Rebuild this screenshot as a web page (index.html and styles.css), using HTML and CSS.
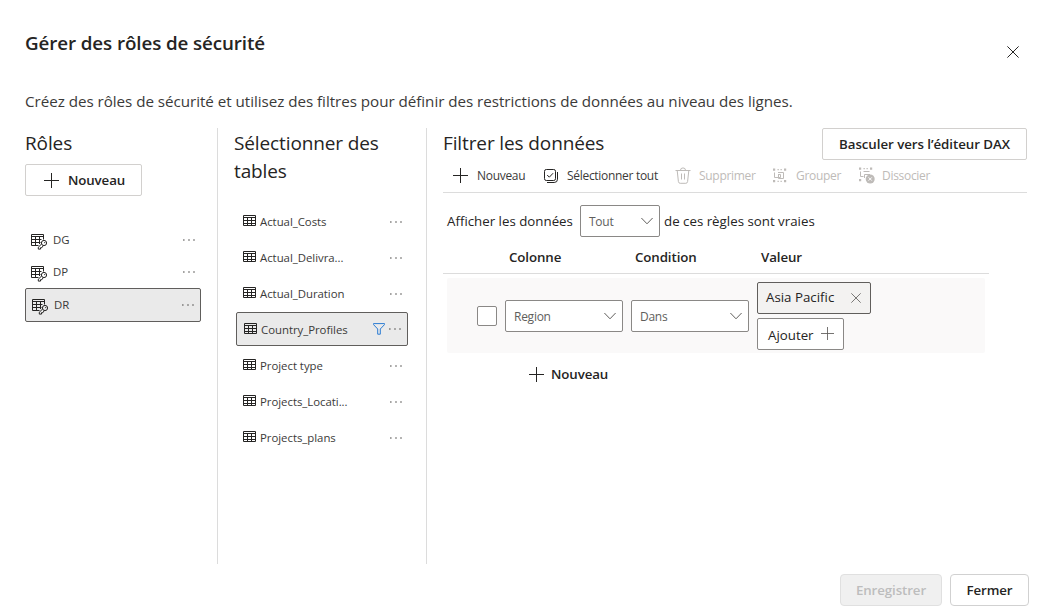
FILE: index.html
```html
<!DOCTYPE html>
<html lang="fr">
<head>
<meta charset="utf-8">
<title>Gérer des rôles de sécurité</title>
<link rel="stylesheet" href="styles.css">
</head>
<body>
<svg class="defs" aria-hidden="true">
  <symbol id="plus" viewBox="0 0 15 15"><path d="M7.5 0v15M0 7.5h15"/></symbol>
  <symbol id="close" viewBox="0 0 12 12"><path d="M.4 .4l11.2 11.2M11.6 .4L.4 11.6"/></symbol>
  <symbol id="chevron" viewBox="0 0 12 8"><path d="M.4 1l5.6 5.8L11.6 1"/></symbol>
  <symbol id="dots" viewBox="0 0 12 2"><path d="M0 1h1.6M5.2 1h1.6M10.2 1h1.6"/></symbol>
  <symbol id="table" viewBox="0 0 13 12"><path d="M.5 .5h12v10H.5zM0 2.5h13M0 5.5h13M0 8.5h13M4.5 2.5v8M8.5 2.5v8"/></symbol>
  <symbol id="role" viewBox="0 0 17 16"><path d="M7.5 11.5H.5V.5h12v5M0 2.5h13M0 5.5h10.5M0 8.5h9.5M4.5 2.5v9M8.5 2.5v7.5M10.6 10L7.3 13.2v1.9h2.2v-1.4h1.4l1.2-1.9"/><circle cx="13" cy="9" r="2.6"/><path d="M13.2 8.6h1"/></symbol>
  <symbol id="funnel" viewBox="0 0 12 12"><path d="M.5 .6h11v1L7.3 6v5.2H4.7V6L.5 1.6z"/></symbol>
  <symbol id="select-all" viewBox="0 0 14 14"><rect x=".5" y=".5" width="11" height="11" rx="1.8"/><path d="M3.2 6l2.1 2.2 3.8-4M13.5 3v7.2a3.3 3.3 0 0 1-3.3 3.3H3"/></symbol>
  <symbol id="trash" viewBox="0 0 16 17"><path d="M.5 3.5h15M5.4 3.5a2.6 2.6 0 0 1 5.2 0M2.2 3.5l1.2 11q.2 1.8 1.8 1.8h5.6q1.6 0 1.8-1.8l1.2-11M6.5 6.5v6M9.5 6.5v6"/></symbol>
  <symbol id="group" viewBox="0 0 15 15"><path d="M2.5 4.5v5h6v-3H6M6 4.5h5.5v6H6.5V7"/><path class="solid" d="M1 .5h2.2v2.2H1zM12 .5h2.2v2.2H12zM1 12h2.2v2.2H1zM12 12h2.2v2.2H12zM5.5 1h1.3v1.3H5.5zM8.5 1h1.3v1.3H8.5zM5.5 12.7h1.3V14H5.5zM8.5 12.7h1.3V14H8.5z"/></symbol>
  <symbol id="ungroup" viewBox="0 0 17 17"><path d="M2.5 4.5v5h3M5.5 4.5h6M6.5 11V7.5H12"/><path class="solid" d="M1 .5h2.2v2.2H1zM12 .5h2.2v2.2H12zM1 12h2.2v2.2H1zM5.5 1h1.3v1.3H5.5zM8.5 1h1.3v1.3H8.5z"/><circle class="solid" cx="12.2" cy="12" r="4.5"/><path class="cross" d="M10.6 10.4l3.2 3.2M13.8 10.4l-3.2 3.2"/></symbol>
</svg>

<main class="dialog">
  <header class="dialog-head">
    <h1>Gérer des rôles de sécurité</h1>
    <button class="close" aria-label="Fermer la fenêtre"><svg width="12" height="12"><use href="#close"/></svg></button>
  </header>
  <p class="intro">Créez des rôles de sécurité et utilisez des filtres pour définir des restrictions de données au niveau des lignes.</p>

  <div class="columns">
    <section class="roles">
      <h2>Rôles</h2>
      <button class="btn new-role"><svg width="15" height="15"><use href="#plus"/></svg><span>Nouveau</span></button>
      <ul class="list">
        <li><svg width="17" height="16"><use href="#role"/></svg><span class="name">DG</span><svg class="more" width="12" height="2"><use href="#dots"/></svg></li>
        <li><svg width="17" height="16"><use href="#role"/></svg><span class="name">DP</span><svg class="more" width="12" height="2"><use href="#dots"/></svg></li>
        <li class="selected"><svg width="17" height="16"><use href="#role"/></svg><span class="name">DR</span><svg class="more" width="12" height="2"><use href="#dots"/></svg></li>
      </ul>
    </section>

    <section class="tables">
      <h2>Sélectionner des tables</h2>
      <ul class="list">
        <li><svg width="13" height="12"><use href="#table"/></svg><span class="name">Actual_Costs</span><svg class="more" width="12" height="2"><use href="#dots"/></svg></li>
        <li><svg width="13" height="12"><use href="#table"/></svg><span class="name">Actual_Delivra...</span><svg class="more" width="12" height="2"><use href="#dots"/></svg></li>
        <li><svg width="13" height="12"><use href="#table"/></svg><span class="name">Actual_Duration</span><svg class="more" width="12" height="2"><use href="#dots"/></svg></li>
        <li class="selected"><svg width="13" height="12"><use href="#table"/></svg><span class="name">Country_Profiles</span><svg class="funnel" width="12" height="12"><use href="#funnel"/></svg><svg class="more" width="12" height="2"><use href="#dots"/></svg></li>
        <li><svg width="13" height="12"><use href="#table"/></svg><span class="name">Project type</span><svg class="more" width="12" height="2"><use href="#dots"/></svg></li>
        <li><svg width="13" height="12"><use href="#table"/></svg><span class="name">Projects_Locati...</span><svg class="more" width="12" height="2"><use href="#dots"/></svg></li>
        <li><svg width="13" height="12"><use href="#table"/></svg><span class="name">Projects_plans</span><svg class="more" width="12" height="2"><use href="#dots"/></svg></li>
      </ul>
    </section>

    <section class="filters">
      <div class="filters-head">
        <h2>Filtrer les données</h2>
        <button class="btn dax">Basculer vers l’éditeur DAX</button>
      </div>
      <div class="toolbar">
        <span class="tool t-new"><svg width="15" height="15"><use href="#plus"/></svg>Nouveau</span>
        <span class="tool t-all"><svg width="14" height="14"><use href="#select-all"/></svg>Sélectionner tout</span>
        <span class="tool t-del off"><svg width="16" height="17"><use href="#trash"/></svg>Supprimer</span>
        <span class="tool t-group off"><svg width="15" height="15"><use href="#group"/></svg>Grouper</span>
        <span class="tool t-ungroup off"><svg width="17" height="17"><use href="#ungroup"/></svg>Dissocier</span>
      </div>
      <div class="match">
        <span class="match-a">Afficher les données</span>
        <div class="select"><span>Tout</span><svg width="12" height="8"><use href="#chevron"/></svg></div>
        <span class="match-b">de ces règles sont vraies</span>
      </div>
      <div class="rule-head"><span>Colonne</span><span>Condition</span><span>Valeur</span></div>
      <div class="rule">
        <span class="checkbox"></span>
        <div class="select"><span>Region</span><svg width="12" height="8"><use href="#chevron"/></svg></div>
        <div class="select"><span>Dans</span><svg width="12" height="8"><use href="#chevron"/></svg></div>
        <div class="values">
          <div class="tag"><span>Asia Pacific</span><svg width="10" height="10" viewBox="0 0 12 12"><use href="#close" width="12" height="12"/></svg></div>
          <button class="add"><span>Ajouter</span><svg width="13" height="13" viewBox="0 0 15 15"><use href="#plus" width="15" height="15"/></svg></button>
        </div>
      </div>
      <button class="new-rule"><svg width="15" height="15"><use href="#plus"/></svg><span>Nouveau</span></button>
    </section>
  </div>

  <footer class="actions">
    <button class="btn save" disabled>Enregistrer</button>
    <button class="btn quit">Fermer</button>
  </footer>
</main>
</body>
</html>
```
FILE: styles.css
```css
* { box-sizing: border-box; }
body {
  margin: 0;
  background: #fff;
  color: #252423;
  font-family: "Open Sans", "Noto Sans", sans-serif;
  font-size: 13.3px;
}
h1, h2, p, ul { margin: 0; padding: 0; }
ul { list-style: none; }
button { font: inherit; color: inherit; background: none; border: 0; padding: 0; }
svg { flex: none; fill: none; stroke: #252423; stroke-width: 1; }
.defs { display: none; }
.solid { fill: currentColor; stroke: none; }
.cross { stroke: #fff; }

.dialog { height: 609px; padding: 28px 11px 3px 25px; display: flex; flex-direction: column; }
.dialog-head { display: flex; justify-content: space-between; height: 60px; padding-right: 10px; }
h1 { font-size: 18.8px; line-height: 30px; font-weight: 600; letter-spacing: -.1px; white-space: nowrap; }
.close { height: 12px; margin: 18px 0 0; display: flex; }
.intro { height: 40px; line-height: 27px; font-size: 15.2px; letter-spacing: -.04px; white-space: nowrap; color: #3b3a39; }

.columns { display: grid; grid-template-columns: 193px 209px 584px; height: 436px; }
.roles, .tables { border-right: 1px solid #dcdcdc; }
h2 { font-size: 19px; line-height: 28px; font-weight: 400; letter-spacing: -.12px; padding-top: 1px; }
.tables { padding-left: 16px; }
.filters { padding-left: 16px; width: 600px; }

.btn {
  height: 32px; border: 1px solid #d2d0ce; border-radius: 2px; background: #fff;
  font-weight: 600; display: flex; align-items: center; justify-content: center; white-space: nowrap;
}
.new-role { width: 117px; margin-top: 7px; gap: 9px; padding-left: 2px; letter-spacing: -.1px; }

.list { color: #3b3a39; font-size: 11.4px; letter-spacing: -.03px; }
.list li { display: flex; align-items: center; white-space: nowrap; }
.list .name { flex: 1; padding-bottom: 2px; }
.list .selected { height: 34px; border: 1px solid #605e5c; border-radius: 2px; background: #eaeaea; }
.list .selected .name { padding-bottom: 1px; }
.more { stroke: #484644; }
.roles .list { margin-top: 28px; width: 176px; }
.roles li { height: 32px; padding: 0 6px; gap: 5px; }
.roles li svg:first-child { margin-top: 3px; }
.tables .list { margin: 19px 0 0 2px; width: 172px; }
.tables li { height: 36px; padding: 0 6px 0 7px; gap: 4px; }
.tables li svg:first-child { margin-bottom: 2px; }
.tables .selected { margin-bottom: 2px; }
.tables .selected .name { padding: 1px 0 0; }
.tables .selected svg:first-child { margin-bottom: 0; }
.funnel { stroke: #2b7cd3; }

.filters-head { display: flex; justify-content: space-between; width: 584px; height: 32px; }
.dax { width: 205px; letter-spacing: -.05px; }
.toolbar { display: flex; width: 584px; height: 33px; border-bottom: 1px solid #dcdcdc; padding-left: 10px; font-size: 12px; letter-spacing: -.3px; color: #3b3a39; }
.tool { display: flex; align-items: center; gap: 9px; height: 31px; white-space: nowrap; }
.t-new { width: 91px; }
.t-all { width: 131px; }
.t-del { width: 97px; gap: 8px; }
.t-group { width: 86px; }
.t-ungroup { gap: 7px; }
.off { color: #bebbb8; }
.off svg { stroke: #bebbb8; }

.match { display: flex; align-items: center; padding: 12px 0 0 4px; white-space: nowrap; }
.match-a { width: 133px; }
.match-b { margin-left: 4px; }
.select {
  display: flex; align-items: center; justify-content: space-between; width: 118px; height: 32px;
  padding: 0 6px 0 8px; border: 1px solid #8a8886; border-radius: 2px; background: #fff;
  color: #605e5c; font-size: 12px; letter-spacing: -.26px;
}
.select span { padding-top: 1px; }
.select svg { stroke: #605e5c; }
.match .select { width: 80px; }
.rule-head { display: flex; width: 546px; height: 37px; padding: 5px 0 0 66px; line-height: 30px; font-weight: 600; letter-spacing: -.1px; border-bottom: 1px solid #dcdcdc; }
.rule-head span { width: 126px; }
.rule { display: flex; align-items: center; gap: 8px; width: 538px; height: 75px; margin: 4px 0 0 4px; padding-left: 30px; background: #faf9f9; border-radius: 2px; }
.checkbox { width: 20px; height: 20px; border: 1px solid #8a8886; border-radius: 2px; background: #fff; }
.values { display: grid; gap: 4px; }
.tag { display: flex; align-items: center; justify-content: space-between; width: 114px; height: 32px; padding: 0 9px 0 8px; border: 1px solid #605e5c; border-radius: 2px; background: #f3f2f1; white-space: nowrap; }
.tag span { padding-bottom: 1px; }
.add { display: flex; align-items: center; justify-content: space-between; width: 87px; height: 32px; padding: 0 9px 0 10px; border: 1px solid #8a8886; border-radius: 2px; background: #fff; }
.add span { padding-top: 2px; }
.add svg, .tag svg { stroke: #605e5c; }
.new-rule { display: flex; align-items: center; gap: 7px; margin: 6px 0 0 86px; height: 30px; font-weight: 600; letter-spacing: -.1px; }

.actions { display: flex; justify-content: flex-end; gap: 8px; margin-top: 10px; }
.actions .btn { border-radius: 4px; }
.save { width: 102px; color: #bdbdbd; background: #f0f0f0; border-color: #e0e0e0; letter-spacing: -.1px; }
.quit { width: 79px; border-color: #d1d1d1; letter-spacing: -.1px; }
```
